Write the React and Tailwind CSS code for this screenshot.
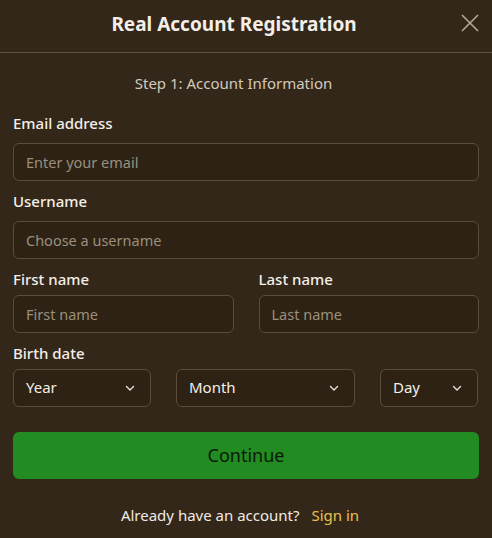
import React from "react";

const font = { fontFamily: '"Segoe UI", "Noto Sans", sans-serif' };

const Chevron = () => (
  <svg width="12" height="12" viewBox="0 0 12 12" fill="none" className="text-[#e8e2d6]">
    <path d="M2.5 4.5 6 8l3.5-3.5" stroke="currentColor" strokeWidth="1.4" strokeLinecap="round" strokeLinejoin="round" />
  </svg>
);

const Field = ({ label, placeholder, gap = "mb-[10px]" }) => (
  <div className="flex flex-col">
    <label className={`text-[15px] leading-5 font-medium text-[#f3efe8] ${gap}`}>{label}</label>
    <input
      placeholder={placeholder}
      className="h-[38px] w-full rounded-md border border-[#5b4d3a] bg-[#2d2214] px-3 text-[14.5px] text-[#f3efe8] placeholder:text-[#9b8f7c] outline-none"
    />
  </div>
);

const Select = ({ label, width }) => (
  <div className={`flex h-[38px] items-center justify-between rounded-md border border-[#5b4d3a] bg-[#2d2214] pl-3 pr-[14px] ${width}`}>
    <span className="text-[15px] text-[#f3efe8]">{label}</span>
    <Chevron />
  </div>
);

export default function App() {
  return (
    <div className="w-[492px] h-[538px] bg-[#33271a] flex flex-col" style={font}>
      <div className="relative h-[53px] flex items-center justify-center border-b border-[#5e5142] pr-[24px] pb-[3px]">
        <h1 className="text-[19px] font-bold text-[#f3efe8]">Real Account Registration</h1>
        <button className="absolute right-[12px] top-[13px] text-[#b3a998]">
          <svg width="20" height="20" viewBox="0 0 20 20" fill="none">
            <path d="M2 2l16 16M18 2 2 18" stroke="currentColor" strokeWidth="1.6" />
          </svg>
        </button>
      </div>
      <div className="px-[13px] flex flex-col">
        <p className="mt-[19px] pr-[25px] text-center text-[15px] text-[#d2cabd]">Step 1: Account Information</p>
        <div className="mt-[18px] flex flex-col gap-[10px]">
          <Field label="Email address" placeholder="Enter your email" />
          <Field label="Username" placeholder="Choose a username" />
          <div className="grid grid-cols-2 gap-[25px]">
            <Field label="First name" placeholder="First name" gap="mb-[6px]" />
            <Field label="Last name" placeholder="Last name" gap="mb-[6px]" />
          </div>
          <div className="flex flex-col">
            <label className="text-[15px] leading-5 font-medium text-[#f3efe8] mb-[6px]">Birth date</label>
            <div className="flex gap-[25px]">
              <Select label="Year" width="w-[138px]" />
              <Select label="Month" width="w-[179px]" />
              <Select label="Day" width="w-[98px]" />
            </div>
          </div>
        </div>
        <button className="mt-[25px] h-[47px] w-full rounded-md bg-[#228b22] text-[18px] text-[#0b1a08]">Continue</button>
        <p className="mt-[25px] pr-[12px] text-center text-[15px] text-[#f0ebe2]">
          Already have an account?<span className="ml-[12px] text-[#e8c14d]">Sign in</span>
        </p>
      </div>
    </div>
  );
}
